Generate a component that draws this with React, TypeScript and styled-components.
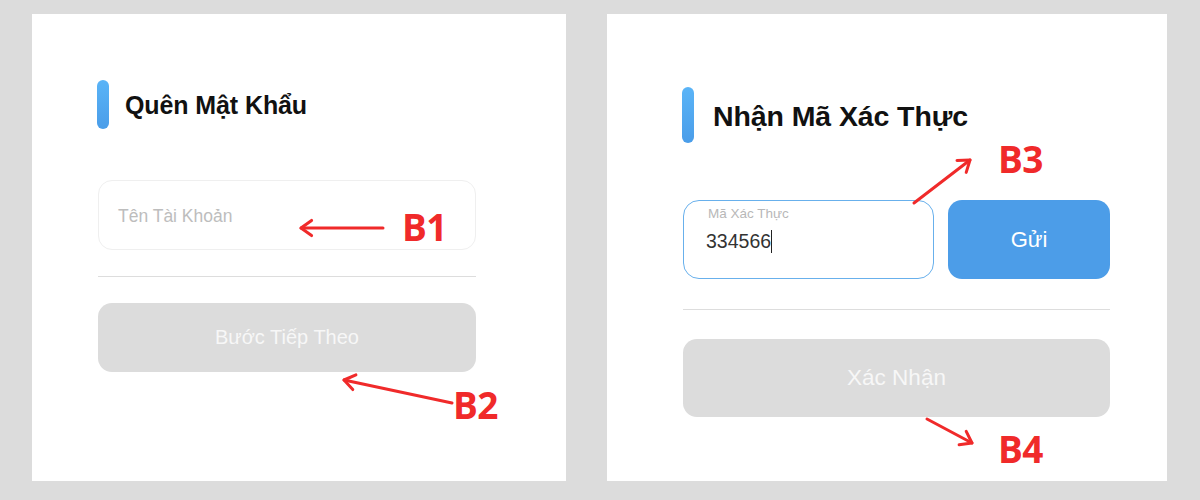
import React from "react";
import styled, { createGlobalStyle } from "styled-components";

const GlobalStyle = createGlobalStyle`
  html, body {
    margin: 0;
    padding: 0;
    background: #dcdcdc;
  }
  body {
    font-family: "Liberation Sans", Arial, sans-serif;
  }
`;

const RED = "#f02a2a";

const Page = styled.div`
  position: relative;
  width: 1200px;
  height: 500px;
  box-sizing: border-box;
  padding: 14px 0 0 32px;
  display: flex;
  gap: 41px;
  background: #dcdcdc;
  overflow: hidden;
`;

const Card = styled.section<{ $w: number; $padTop: number; $padL: number; $padR: number }>`
  width: ${(p) => p.$w}px;
  height: 467px;
  box-sizing: border-box;
  background: #ffffff;
  padding: ${(p) => p.$padTop}px ${(p) => p.$padR}px 0 ${(p) => p.$padL}px;
  display: flex;
  flex-direction: column;
`;

const TitleRow = styled.div<{ $barH: number; $gap: number }>`
  display: flex;
  align-items: center;
  gap: ${(p) => p.$gap}px;
  height: ${(p) => p.$barH}px;
`;

const Bar = styled.span<{ $h: number }>`
  width: 12px;
  height: ${(p) => p.$h}px;
  border-radius: 6px;
  background: linear-gradient(180deg, #5ab4f7 0%, #4a9de9 100%);
  flex: none;
  margin-left: -1px;
`;

const Title = styled.h2<{ $size: number }>`
  margin: 0;
  font-size: ${(p) => p.$size}px;
  font-weight: 700;
  color: #111111;
  letter-spacing: -0.1px;
  padding-top: 2px;
`;

const PlainInput = styled.div`
  margin-top: 51px;
  height: 70px;
  box-sizing: border-box;
  border: 1px solid #efefef;
  border-radius: 14px;
  display: flex;
  align-items: center;
  padding: 2px 20px 0 19px;
`;

const Placeholder = styled.span`
  font-size: 17.5px;
  color: #bdbdbd;
`;

const Divider = styled.hr<{ $gap: number }>`
  margin: ${(p) => p.$gap}px 0 0;
  border: none;
  border-top: 1px solid #dddddd;
  height: 0;
`;

const WideButton = styled.button<{ $h: number; $gap: number; $size: number }>`
  margin-top: ${(p) => p.$gap}px;
  height: ${(p) => p.$h}px;
  width: 100%;
  border: none;
  border-radius: 14px;
  background: #dcdcdc;
  color: #f7f7f7;
  font-family: "Liberation Sans", Arial, sans-serif;
  font-size: ${(p) => p.$size}px;
  padding: 0;
`;

const CodeRow = styled.div`
  margin-top: 57px;
  height: 79px;
  display: flex;
  gap: 14px;
`;

const CodeField = styled.div`
  width: 251px;
  box-sizing: border-box;
  border: 1px solid #68b0ec;
  border-radius: 16px;
  padding: 5px 23px 0 22px;
  display: flex;
  flex-direction: column;
`;

const FieldLabel = styled.span`
  font-size: 13.5px;
  color: #b8b8b8;
  line-height: 16px;
  margin-left: 2px;
`;

const FieldValue = styled.span`
  margin-top: 7px;
  font-size: 19.5px;
  color: #333333;
  line-height: 24px;
  display: flex;
  align-items: center;
`;

const Caret = styled.span`
  display: inline-block;
  width: 1px;
  height: 23px;
  background: #222;
`;

const SendButton = styled.button`
  flex: 1;
  border: none;
  border-radius: 14px;
  background: #4c9de8;
  color: #ffffff;
  font-family: "Liberation Sans", Arial, sans-serif;
  font-size: 22px;
  padding: 0;
`;

const Overlay = styled.svg`
  position: absolute;
  left: 0;
  top: 0;
  pointer-events: none;
`;

const StepLabel = styled.span<{ $x: number; $y: number }>`
  position: absolute;
  left: ${(p) => p.$x}px;
  top: ${(p) => p.$y}px;
  font-family: "Open Sans", "Noto Sans", sans-serif;
  font-weight: 700;
  font-size: 37px;
  line-height: 37px;
  color: ${RED};
  letter-spacing: -0.5px;
`;

type Arrow = { x1: number; y1: number; x2: number; y2: number };

const arrows: Arrow[] = [
  { x1: 383, y1: 228, x2: 301, y2: 228 },
  { x1: 452, y1: 403, x2: 344, y2: 380 },
  { x1: 914, y1: 203, x2: 970, y2: 160 },
  { x1: 927, y1: 419, x2: 972, y2: 443 },
];

const headPath = ({ x1, y1, x2, y2 }: Arrow) => {
  const a = Math.atan2(y1 - y2, x1 - x2);
  const len = 13;
  const spread = 0.62;
  const p1 = [x2 + len * Math.cos(a + spread), y2 + len * Math.sin(a + spread)];
  const p2 = [x2 + len * Math.cos(a - spread), y2 + len * Math.sin(a - spread)];
  return `M${p1[0]} ${p1[1]} L${x2} ${y2} L${p2[0]} ${p2[1]}`;
};

const steps = [
  { text: "B1", x: 402, y: 208 },
  { text: "B2", x: 453, y: 386 },
  { text: "B3", x: 998, y: 140 },
  { text: "B4", x: 998, y: 430 },
];

export default function App() {
  return (
    <>
      <GlobalStyle />
      <Page>
        <Card $w={534} $padTop={66} $padL={66} $padR={90}>
          <TitleRow $barH={49} $gap={16}>
            <Bar $h={49} />
            <Title $size={25}>Quên Mật Khẩu</Title>
          </TitleRow>
          <PlainInput>
            <Placeholder>Tên Tài Khoản</Placeholder>
          </PlainInput>
          <Divider $gap={26} />
          <WideButton $h={69} $gap={26} $size={20}>
            Bước Tiếp Theo
          </WideButton>
        </Card>

        <Card $w={560} $padTop={73} $padL={76} $padR={57}>
          <TitleRow $barH={56} $gap={19}>
            <Bar $h={56} />
            <Title $size={28.5}>Nhận Mã Xác Thực</Title>
          </TitleRow>
          <CodeRow>
            <CodeField>
              <FieldLabel>Mã Xác Thực</FieldLabel>
              <FieldValue>
                334566
                <Caret />
              </FieldValue>
            </CodeField>
            <SendButton>Gửi</SendButton>
          </CodeRow>
          <Divider $gap={30} />
          <WideButton $h={78} $gap={29} $size={22.5}>
            Xác Nhận
          </WideButton>
        </Card>

        <Overlay width={1200} height={500} viewBox="0 0 1200 500">
          {arrows.map((ar, i) => (
            <g key={i} stroke={RED} strokeWidth={3} fill="none" strokeLinecap="round" strokeLinejoin="round">
              <line x1={ar.x1} y1={ar.y1} x2={ar.x2} y2={ar.y2} />
              <path d={headPath(ar)} />
            </g>
          ))}
        </Overlay>
        {steps.map((s) => (
          <StepLabel key={s.text} $x={s.x} $y={s.y}>
            {s.text}
          </StepLabel>
        ))}
      </Page>
    </>
  );
}
